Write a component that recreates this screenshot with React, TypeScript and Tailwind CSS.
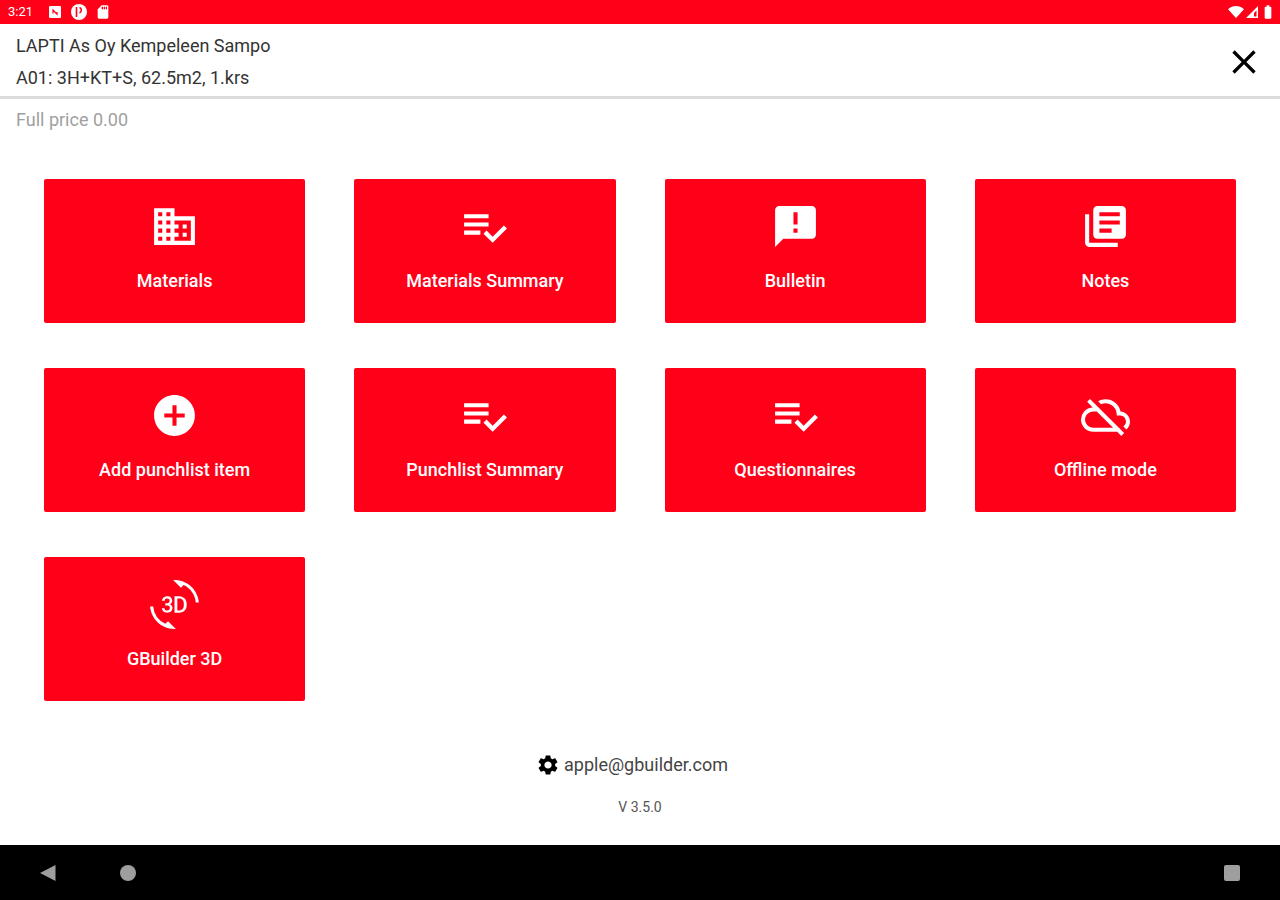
import type { ComponentType } from 'react';
import {
  Md3dRotation,
  MdAddCircle,
  MdAnnouncement,
  MdBatteryFull,
  MdClose,
  MdDomain,
  MdLibraryBooks,
  MdOutlineCloudOff,
  MdSdCard,
  MdSettings,
} from 'react-icons/md';

interface MenuItem {
  label: string;
  icon: ComponentType<{ className?: string }>;
}

// The check mark reaches further right than in the react-icons version
function ListCheckIcon({ className }: { className?: string }) {
  return (
    <svg className={className} viewBox="0 0 24 24" fill="currentColor">
      <path d="M14 10H2v2h12v-2zm0-4H2v2h12V6zM2 16h8v-2H2v2zm19.5-4.5L23 13l-6.99 7-4.51-4.5L13 14l3.01 3 5.49-5.5z" />
    </svg>
  );
}

const MENU_ITEMS: MenuItem[] = [
  { label: 'Materials', icon: MdDomain },
  { label: 'Materials Summary', icon: ListCheckIcon },
  { label: 'Bulletin', icon: MdAnnouncement },
  { label: 'Notes', icon: MdLibraryBooks },
  { label: 'Add punchlist item', icon: MdAddCircle },
  { label: 'Punchlist Summary', icon: ListCheckIcon },
  { label: 'Questionnaires', icon: ListCheckIcon },
  { label: 'Offline mode', icon: MdOutlineCloudOff },
  { label: 'GBuilder 3D', icon: Md3dRotation },
];

function StatusBar() {
  return (
    <div className="h-6 px-2 flex items-center justify-between bg-[#ff0018] text-white">
      <div className="flex items-center">
        <span className="text-[13px] leading-6">3:21</span>
        <svg className="ml-4 w-3 h-3" viewBox="0 0 12 12" fill="none">
          <rect width="12" height="12" rx="1" fill="currentColor" />
          <path d="M4 7.5V4L8 8.2V6" stroke="#ff0018" strokeWidth="1.2" />
        </svg>
        <svg className="ml-2.5 w-4 h-4" viewBox="0 0 16 16" fill="none">
          <circle cx="8" cy="8" r="8" fill="currentColor" />
          <path d="M5.5 3v10M8.5 3.5a3 3 0 0 1 0 5.5" stroke="#ff0018" strokeWidth="1.6" />
        </svg>
        <MdSdCard className="ml-2 w-4 h-4" />
      </div>
      <div className="flex items-center">
        <svg className="w-4 h-3" viewBox="0 0 16 12" fill="currentColor">
          <path d="M0 3.2C4.8-1 11.2-1 16 3.2L8 12z" />
        </svg>
        <svg className="ml-0.5 w-3 h-3" viewBox="0 0 12 12" fill="currentColor">
          <path fillRule="evenodd" d="M12 0v12H0zM10.5 4.5L8 7v3.500h2.5z" />
        </svg>
        <MdBatteryFull className="ml-0.5 -mr-1 w-4 h-4" />
      </div>
    </div>
  );
}

function MenuCard({ label, icon: Icon }: MenuItem) {
  return (
    <button
      type="button"
      className="h-36 pt-[23px] flex flex-col items-center rounded-xs bg-[#ff0018] text-white cursor-pointer"
    >
      <Icon className="w-[49px] h-[49px]" />
      <span className="mt-4 text-lg leading-7 font-medium">{label}</span>
    </button>
  );
}

function NavigationBar() {
  return (
    <nav className="h-[55px] px-10 flex items-center bg-black text-[#9e9e9e]">
      <button type="button" aria-label="Back" className="w-4 h-4">
        <svg viewBox="0 0 16 16" fill="currentColor">
          <path d="M15.5 0v16L0 8z" />
        </svg>
      </button>
      <button type="button" aria-label="Home" className="ml-16 w-4 h-4 rounded-full bg-[#9e9e9e]" />
      <button type="button" aria-label="Recent apps" className="ml-auto w-4 h-4 rounded-xs bg-[#9e9e9e]" />
    </nav>
  );
}

export default function App() {
  return (
    <div className="min-h-screen flex flex-col bg-white font-['Roboto',sans-serif]">
      <StatusBar />

      <header className="h-[75px] px-4 pt-[3px] flex items-center justify-between border-b-3 border-[#dcdcdc]">
        <div className="text-lg leading-8 text-[#333333]">
          <h1>LAPTI As Oy Kempeleen Sampo</h1>
          <p>A01: 3H+KT+S, 62.5m2, 1.krs</p>
        </div>
        <button type="button" aria-label="Close" className="text-black cursor-pointer">
          <MdClose className="w-10 h-10" />
        </button>
      </header>

      <main className="flex-1 flex flex-col">
        <p className="px-4 pt-[9px] text-lg leading-6 text-[#a0a0a0]">Full price 0.00</p>

        <div className="mt-[47px] px-11 grid grid-cols-4 gap-x-[49px] gap-y-[45px]">
          {MENU_ITEMS.map((item) => (
            <MenuCard key={item.label} {...item} />
          ))}
        </div>

        <footer className="mt-auto pb-7 flex flex-col items-center">
          <button type="button" className="-ml-4 flex items-center gap-1 cursor-pointer">
            <MdSettings className="w-6 h-6 text-black" />
            <span className="text-lg leading-6 text-[#444444]">apple@gbuilder.com</span>
          </button>
          <p className="mt-5 text-sm leading-5 text-[#555555]">V 3.5.0</p>
        </footer>
      </main>

      <NavigationBar />
    </div>
  );
}
